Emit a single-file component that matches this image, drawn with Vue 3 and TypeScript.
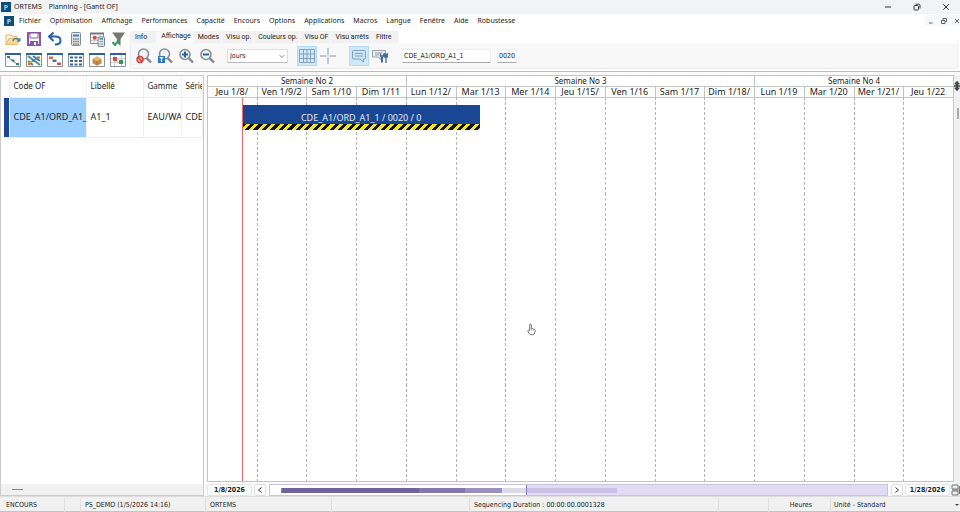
<script setup lang="ts">
import { ref } from 'vue'

interface Week { label: string; days: number }
interface Operation { label: string; start: number; length: number }

const menus: string[] = ['Fichier', 'Optimisation', 'Affichage', 'Performances', 'Capacité', 'Encours', 'Options', 'Applications', 'Macros', 'Langue', 'Fenêtre', 'Aide', 'Robustesse']
const tabs: string[] = ['Info', 'Affichage', 'Modes', 'Visu op.', 'Couleurs op.', 'Visu OF', 'Visu arrêts', 'Filtre']
const activeTab = ref('Affichage')

const weeks: Week[] = [
  { label: 'Semaine No 2', days: 4 },
  { label: 'Semaine No 3', days: 7 },
  { label: 'Semaine No 4', days: 4 },
]
const days: string[] = ['Jeu 1/8/', 'Ven 1/9/2', 'Sam 1/10', 'Dim 1/11', 'Lun 1/12/', 'Mar 1/13', 'Mer 1/14', 'Jeu 1/15/', 'Ven 1/16', 'Sam 1/17', 'Dim 1/18/', 'Lun 1/19', 'Mar 1/20', 'Mer 1/21/', 'Jeu 1/22']

// Positions on the time axis, in days from its left edge
const now = 0.68
const operations: Operation[] = [{ label: 'CDE_A1/ORD_A1_1 / 0020 / 0', start: 0.69, length: 4.78 }]
const toPercent = (value: number): string => `${(value / days.length) * 100}%`

const unit = ref('Jours')
const order = ref('CDE_A1/ORD_A1_1')
const operation = ref('0020')
const showGrid = ref(true)
const showTips = ref(true)
</script>

<template>
  <div class="app">
    <header class="titlebar">
      <svg class="logo" viewBox="0 0 10 10"><rect width="10" height="10" fill="#0d4f78" /><text x="5" y="8" text-anchor="middle" class="logo-letter">P</text></svg>
      <h1><span>ORTEMS</span><span>Planning - [Gantt OF]</span></h1>
      <div class="window-buttons">
        <button aria-label="Réduire"><svg viewBox="0 0 8 8"><path d="M1 4h6" /></svg></button>
        <button aria-label="Restaurer"><svg viewBox="0 0 8 8"><rect x="1" y="2.5" width="4.5" height="4.5" rx="1" /><path d="M2.7 1.2h3.1q1.2 0 1.2 1.2v3.1" /></svg></button>
        <button aria-label="Fermer"><svg viewBox="0 0 8 8"><path d="M1.2 1.2l5.6 5.6M6.8 1.2L1.2 6.8" /></svg></button>
      </div>
    </header>

    <nav class="menubar">
      <svg class="logo" viewBox="0 0 10 10"><rect width="10" height="10" fill="#0d4f78" /><text x="5" y="8" text-anchor="middle" class="logo-letter">P</text></svg>
      <button v-for="menu in menus" :key="menu" class="menu">{{ menu }}</button>
      <div class="child-buttons">
        <button aria-label="Réduire la fenêtre"><svg viewBox="0 0 8 8"><path d="M2 6h3.5" /></svg></button>
        <button aria-label="Restaurer la fenêtre"><svg viewBox="0 0 8 8"><path d="M1.5 3.5h3.5v3h-3.5zM3 3V1.5h3.5v3H5" /></svg></button>
        <button aria-label="Fermer la fenêtre"><svg viewBox="0 0 8 8"><path d="M2 2l4 4M6 2L2 6" /></svg></button>
      </div>
    </nav>

    <section class="toolbar">
      <div class="tools">
        <button aria-label="Ouvrir"><svg viewBox="0 0 16 16"><path d="M1 13V4h5l1.500 1.500H12V8" fill="#fff3d8" stroke="#e3b56f" /><path d="M1 13.500l3-6h11l-3 6z" fill="#fbd794" stroke="#e9b869" /><path d="M8 10q1-4 5.500-1.500" fill="none" stroke="#377db9" stroke-width="1.500" /><path d="M15.500 6.500v4h-4z" fill="#377db9" /></svg></button>
        <button aria-label="Enregistrer"><svg viewBox="0 0 16 16"><path d="M2 2h12v12H2z" fill="#fff" stroke="#8756a7" stroke-width="2" /><path d="M4 2h8v5H4z" fill="#fff" stroke="#8756a7" /><path d="M4 10h8v4H4z" fill="#8756a7" /><path d="M8 11h2v3H8z" fill="#fff" /></svg></button>
        <button aria-label="Annuler"><svg viewBox="0 0 16 16"><path d="M6.500 1.500L2 5.500l4.500 4.500M2.500 5.500h6q5 0 5 4t-5 4H8" fill="none" stroke="#2a62a5" stroke-width="2" /></svg></button>
        <button aria-label="Calculer"><svg viewBox="0 0 16 16"><rect x="3.500" y="1.500" width="9" height="13" rx="1" fill="#e5e8ea" stroke="#858b90" /><path d="M5 3.500h6v2H5z" fill="#3f85c6" /><path d="M5 8h6M5 10.500h6M5 13h6" stroke="#777" stroke-width="1.500" stroke-dasharray="1.500 .7" /></svg></button>
        <button aria-label="Calculer le planning"><svg viewBox="0 0 16 16"><path d="M1.500 2.500h13v10h-13z" fill="#fff" stroke="#8b8b8b" /><path d="M1 2.500h14" stroke="#6e7880" stroke-width="2" /><path d="M2 6.500h12M2 9.500h12M5 4v8M11 4v8" stroke="#c9c9c9" /><path d="M4 5h3.500v3.500H4z" fill="#d8493b" /><rect x="9" y="6" width="6.500" height="9.500" rx=".8" fill="#dce7f0" stroke="#75818b" /><path d="M10.500 8h3.500" stroke="#3f85c6" stroke-width="1.500" /><path d="M10.500 10.500H14M10.500 13H14" stroke="#788" stroke-dasharray="1 .3" /></svg></button>
        <button aria-label="Appliquer le filtre"><svg viewBox="0 0 16 16"><path d="M2 1.500h13L10.500 8v7L7 12V8z" fill="#777" /><path d="M2.500 11l2.500 3 5-6" fill="none" stroke="#319a5c" stroke-width="2" /></svg></button>

        <button aria-label="Enchaînement"><svg viewBox="0 0 16 16"><path class="frame" d="M.5 1.500h15v13H.5z" /><path class="band" d="M0 1h16v2H0z" /><path d="M2 4.500l12 9" stroke="#579078" /><path d="M2 4h3v2H2zM6.500 7.500h3v2h-3zM11 11h3v2h-3z" fill="#348263" /></svg></button>
        <button aria-label="Gantt ressources"><svg viewBox="0 0 16 16"><path class="frame" d="M.5 1.500h15v13H.5z" /><path class="band" d="M0 1h16v2H0z" /><path d="M2 4l12 9M2 9l5 4" stroke="#489277" stroke-width="2" /><path d="M2 12l11-7" stroke="#e2a438" stroke-width="2" /><path d="M7 4l7 5" stroke="#3976bd" stroke-width="2" /><path d="M2 11h2.500v2H2zM11 4.500h3v2h-3z" fill="#e66a35" /><path d="M6 7.500h3v2H6z" fill="#3976bd" /></svg></button>
        <button aria-label="Gantt OF"><svg viewBox="0 0 16 16"><path class="frame" d="M.5 1.500h15v13H.5z" /><path class="band" d="M0 1h16v2H0z" /><path d="M2 4.500h4v2.500H2z" fill="#e66a35" /><path d="M5.500 7.500h4V10h-4z" fill="#3976bd" /><path d="M10 10.500h4V13h-4z" fill="#c55941" /></svg></button>
        <button aria-label="Tableau"><svg viewBox="0 0 16 16"><path class="frame" d="M.5 1.500h15v13H.5z" /><path class="band" d="M0 1h16v2H0z" /><path d="M2 5.500h12M2 9h12M2 12.500h12" stroke="#3b6793" stroke-width="2" stroke-dasharray="3 1.500" /></svg></button>
        <button aria-label="Stocks"><svg viewBox="0 0 16 16"><path class="frame" d="M.5 1.500h15v13H.5z" /><path class="band" d="M0 1h16v2H0z" /><path d="M3.500 7l4.500-2.500L12.500 7v4.500L8 13.500l-4.500-2z" fill="#c88b45" /><path d="M3.500 7L8 9l4.500-2L8 4.500z" fill="#e6b778" /><path d="M8 9v4.500" stroke="#a86d2e" stroke-width=".7" /></svg></button>
        <button aria-label="Calendrier"><svg viewBox="0 0 16 16"><path class="frame" d="M.5 1.500h15v13H.5z" /><path class="band" d="M0 1h16v2H0z" /><path d="M1 6.500h14M1 10.500h14M4.500 3v11M11.500 3v11" stroke="#ccc" /><path d="M3 5h4v4H3z" fill="#d8493b" /><path d="M9 8h4v4H9z" fill="#3c8d68" /></svg></button>
      </div>

      <div class="ribbon">
        <div class="tabs" role="tablist">
          <button v-for="tab in tabs" :key="tab" role="tab" :aria-selected="tab === activeTab" :class="['tab', { active: tab === activeTab }]" @click="activeTab = tab">{{ tab }}</button>
        </div>
        <div class="controls">
          <div class="zooms">
            <button aria-label="Annuler le zoom"><svg viewBox="0 0 16 16"><path class="handle" d="M10.500 10L15 14.500" /><circle class="lens" cx="7.500" cy="6" r="5" /><circle cx="4" cy="11.500" r="3" fill="#f5c5be" stroke="#d23d30" stroke-width="1.400" /><path d="M2 9.500l4 4" stroke="#d23d30" stroke-width="1.400" /></svg></button>
            <button aria-label="Zoom texte"><svg viewBox="0 0 16 16"><path class="handle" d="M10.500 10L15 14.500" /><circle class="lens" cx="7.500" cy="6" r="5" /><path d="M1 8h7v7H1z" fill="#2c75b8" /><path d="M2.500 9.700h4M4.500 9.700V14" stroke="#fff" stroke-width="1.200" /></svg></button>
            <button aria-label="Zoom avant"><svg viewBox="0 0 16 16"><path class="handle" d="M10.500 10L15 14.500" /><circle class="lens" cx="7" cy="6.500" r="5" /><path d="M4 6.500h6M7 3.500v6" stroke="#2a65a3" stroke-width="2" /></svg></button>
            <button aria-label="Zoom arrière"><svg viewBox="0 0 16 16"><path class="handle" d="M10.500 10L15 14.500" /><circle class="lens" cx="7" cy="6.500" r="5" /><path d="M4 6.500h6" stroke="#2a65a3" stroke-width="2" /></svg></button>
          </div>
          <div class="unit">
            <select v-model="unit" aria-label="Unité de temps"><option>Jours</option></select>
            <svg viewBox="0 0 8 8"><path d="M1.500 3L4 5.500 6.500 3" /></svg>
          </div>
          <div class="toggles">
            <button aria-label="Grille" :class="{ pressed: showGrid }" @click="showGrid = !showGrid"><svg viewBox="0 0 16 16"><path d="M.5 1.500h15v13H.5zM4.500 1.500v13M8 1.500v13M11.500 1.500v13M.5 6h15M.5 10.500h15" fill="none" stroke="#7f9bb6" stroke-width=".9" /></svg></button>
            <button aria-label="Repère"><svg viewBox="0 0 16 16"><path d="M8 0v6.500M8 9.500V16M0 8h6.500M9.500 8H16M7.500 8h1" stroke="#7f98ae" /></svg></button>
          </div>
          <div class="toggles">
            <button aria-label="Infobulles" :class="{ pressed: showTips }" @click="showTips = !showTips"><svg viewBox="0 0 16 16"><path d="M2.500 2.500h11q1 0 1 1V10q0 1-1 1h-1v3L9 11H2.500q-1 0-1-1V3.500q0-1 1-1z" fill="#cbe3f6" stroke="#86a0b9" /><path d="M4 5.500h8M4 8h8" stroke="#8fa5ba" /></svg></button>
            <button aria-label="Paramétrer les infobulles"><svg viewBox="0 0 16 16"><path d="M.5 2.500h13V9H9v2.500L6 9H.5z" fill="#eee" stroke="#9a9fa5" /><path d="M3 5h7M3 7h4" stroke="#999" /><path d="M10 8.500v6" stroke="#416f9c" stroke-width="2" /><path d="M8.500 5.500v2.500h3V5.500M14 6v9M12.800 5v4h2.500V5" fill="none" stroke="#416f9c" stroke-width="1.300" /></svg></button>
          </div>
          <div class="fields">
            <input v-model="order" class="order" aria-label="Ordre de fabrication">
            <input v-model="operation" class="operation" aria-label="Opération">
          </div>
        </div>
      </div>
    </section>

    <main class="workspace">
      <section class="orders">
        <table>
          <colgroup><col class="c-mark"><col class="c-code"><col class="c-label"><col class="c-range"><col class="c-serie"></colgroup>
          <thead><tr><th></th><th>Code OF</th><th>Libellé</th><th>Gamme</th><th>Série</th></tr></thead>
          <tbody><tr><td class="mark"></td><td class="selected">CDE_A1/ORD_A1_1</td><td>A1_1</td><td>EAU/WAT</td><td>CDE_</td></tr></tbody>
        </table>
        <div class="orders-scroll"><span class="thumb"></span></div>
      </section>

      <section class="planning">
        <div class="chart">
          <div class="axis weeks">
            <div v-for="week in weeks" :key="week.label" :style="{ gridColumn: `span ${week.days}` }">{{ week.label }}</div>
          </div>
          <div class="axis days"><div v-for="day in days" :key="day">{{ day }}</div></div>
          <div class="plot">
            <div class="axis lines"><div v-for="day in days" :key="day"></div></div>
            <div v-for="op in operations" :key="op.label" class="operation-bar" :style="{ left: toPercent(op.start), width: toPercent(op.length) }">
              <span>{{ op.label }}</span>
            </div>
            <div class="now" :style="{ left: toPercent(now) }"></div>
            <svg class="pointer" viewBox="0 0 10 14"><path d="M3 8V2q0-1 .9-1t.9 1v4q2-.6 2.200.6 1.800-.4 2 1V9q0 4-3.500 4-2.500 0-3.500-2L.8 8.200Q1.500 6.800 3 8.500z" fill="#fff" stroke="#555" stroke-width=".9" /><path d="M4.800 6v2M7 6.800v1.500" stroke="#777" stroke-width=".6" /></svg>
          </div>
        </div>
        <div class="timeline">
          <span class="date">1/8/2026</span>
          <button class="step" aria-label="Période précédente"><svg viewBox="0 0 8 8"><path d="M5.500 1.500L2.500 4l3 2.500" /></svg></button>
          <div class="track"><div class="window"><div class="load"></div></div><div class="beyond"><div class="load-light"></div></div></div>
          <button class="step" aria-label="Période suivante"><svg viewBox="0 0 8 8"><path d="M2.500 1.500L5.500 4l-3 2.500" /></svg></button>
          <span class="date">1/28/2026</span>
        </div>
      </section>

      <aside class="side">
        <svg class="split" viewBox="0 0 7 12"><path d="M3.500 0L7 4H5v1h2v2H5v1h2L3.500 12 0 8h2V7H0V5h2V4H0z" /></svg>
        <span class="side-thumb"></span>
        <svg class="layout" viewBox="0 0 9 12"><path d="M1 1h6v4H1zM1 7h6v4H1zM1 6h7M8.500 2v8" /></svg>
      </aside>
    </main>

    <footer class="status">
      <span>ENCOURS</span><span></span><span>PS_DEMO (1/5/2026 14:16)</span><span>ORTEMS</span><span></span>
      <span>Sequencing Duration : 00:00:00.0001328</span><span></span><span class="right">Heures</span><span>Unité - Standard</span><i class="caret"></i>
    </footer>
  </div>
</template>

<style>
html, body { margin: 0; }
</style>

<style scoped>
* { box-sizing: border-box; }
.app { display: flex; flex-direction: column; height: 100vh; overflow: hidden; background: #fff; color: #222; font: 8px/12px "Noto Sans", "Open Sans", sans-serif; }
button { border: 0; padding: 0; margin: 0; background: none; color: inherit; font: inherit; display: flex; align-items: center; justify-content: center; }
.titlebar { display: flex; align-items: center; height: 14px; flex: none; background: #f2f3f5; padding-left: 1px; gap: 3px; }
.logo { width: 10px; height: 10px; flex: none; }
.logo-letter { fill: #a9d5ea; font: bold 7px "Noto Sans", sans-serif; }
h1 { display: flex; gap: 7px; margin: 0; font: 7px/14px "Noto Sans", sans-serif; }
.window-buttons { display: flex; margin-left: auto; }
.window-buttons button { width: 29px; height: 14px; }
.window-buttons svg, .child-buttons svg { width: 8px; height: 8px; fill: none; stroke: #333; stroke-width: 1; }
.menubar { display: flex; align-items: center; height: 13px; flex: none; padding-left: 4px; gap: 9px; font-size: 7px; }
.menubar .logo { margin-right: -4px; }
.menu { white-space: nowrap; line-height: 13px; }
.child-buttons { display: flex; margin: 0 -3px 0 auto; gap: 1px; }
.child-buttons button { width: 12px; height: 11px; background: #f6f7f9; }
.child-buttons svg { stroke: #567; }

.toolbar { display: flex; flex: none; height: 45px; padding: 1px 2px 2px 0; border-bottom: 1px solid #bcbcbc; }
.tools { display: grid; grid-template-columns: repeat(6, 21px); grid-template-rows: 21px 21px; width: 130px; flex: none; padding-left: 2px; }
.tools svg, .controls button svg { width: 16px; height: 16px; fill: none; }
.frame { fill: #fff; stroke: #8b9299; }
.band { fill: #2f619b; }
.ribbon { flex: 1; min-width: 0; display: flex; flex-direction: column; }
.tabs { display: flex; height: 15px; align-items: flex-end; font: 7px/12px Roboto, "Noto Sans", sans-serif; }
.tab { height: 12px; padding: 0 3px 0 4px; background: #f1f1f1; box-shadow: inset -1px 0 #f8f8f8; white-space: nowrap; }
.tab:first-child { padding: 0 10px 0 5px; }
.tab:last-child { padding-right: 7px; }
.tab.active { height: 14px; padding-bottom: 1px; background: #f9f9f9; }
.controls { flex: 1; display: flex; align-items: center; background: #f8f8f8; border: 1px solid #ebebeb; border-top: 0; padding-left: 2px; }
.zooms { display: flex; }
.zooms button { width: 21px; height: 20px; }
.lens { fill: #eef5fa; stroke: #8a8d90; stroke-width: 1.6; }
.handle { stroke: #85888b; stroke-width: 2.4; }
.unit { position: relative; width: 61px; margin: 0 9px 0 10px; }
.unit select { appearance: none; display: block; width: 100%; height: 14px; padding: 0 2px; border: 1px solid #ddd; border-bottom-color: #bbb; border-radius: 1px; background: #fff; color: #222; font: 7px/12px "DejaVu Sans Condensed", "DejaVu Sans", sans-serif; }
.unit svg { position: absolute; right: 2px; top: 3px; width: 8px; height: 8px; fill: none; stroke: #777; stroke-width: .8; pointer-events: none; }
.toggles { display: flex; gap: 1px; margin-right: 11px; }
.toggles button { width: 20px; height: 20px; }
.toggles .pressed { background: #cfe8fb; border: 1px solid #b4dbf8; }
.fields { display: flex; gap: 6px; margin-left: 1px; }
.fields input { height: 14px; padding: 0 1px; border: 1px solid #eee; border-bottom-color: #aaa; background: #fff; color: #222; font: 7px/12px "DejaVu Sans Condensed", "DejaVu Sans", sans-serif; outline: 0; }
.fields .order { width: 89px; }
.fields .operation { width: 20px; }

.workspace { display: flex; flex: 1; min-height: 0; padding-top: 3px; background: #fbfbfb; }
.orders { display: flex; flex-direction: column; width: 204px; flex: none; border: 1px solid #ccc; background: #fff; margin-right: 3px; }
table { table-layout: fixed; border-collapse: collapse; margin-left: 3px; width: calc(100% - 3px); }
.c-mark { width: 5px; } .c-code { width: 77px; } .c-label { width: 57px; } .c-range { width: 38px; }
th, td { padding: 0 0 0 4px; text-align: left; font-weight: 400; white-space: nowrap; overflow: hidden; border-right: 1px solid #f0f0f0; border-bottom: 1px solid #ececec; }
th { height: 21px; font-size: 8px; } td { height: 40px; font-size: 9px; }
th:first-child, td:first-child { padding: 0; }
.mark { background: #1a4794; }
.selected { background: #9bcfff; }
.orders-scroll { margin-top: auto; height: 11px; background: #f1f1f1; display: flex; align-items: center; padding-left: 11px; }
.thumb { width: 11px; height: 1px; background: #888; }

.planning { display: flex; flex-direction: column; flex: 1; min-width: 0; }
.chart { display: flex; flex-direction: column; flex: 1; min-height: 0; border: 1px solid #c4c4c4; border-width: 1px 0 1px 1px; background: #fff; }
.axis { display: grid; grid-template-columns: repeat(15, 1fr); }
.weeks, .days { text-align: center; line-height: 10px; white-space: nowrap; }
.weeks { font-size: 8px; }
.days { font-size: 9px; }
.weeks > div, .days > div { height: 11px; border-right: 1px solid #c4c4c4; border-bottom: 1px solid #c4c4c4; }
.days > div { padding-right: 1px; }
.plot { position: relative; flex: 1; }
.lines { height: 100%; }
.lines > div { border-right: 1px solid; border-image: repeating-linear-gradient(#b4b4b4 0 3px, #fff 3px 5px) 1; }
.lines > div:last-child { border-right: 1px solid #ccc; border-image: none; }
.now { position: absolute; top: 0; bottom: 0; width: 1px; background: #e26b6b; }
.operation-bar { position: absolute; top: 7px; height: 25px; background: repeating-linear-gradient(135deg, #111 0 3px, #f5e71c 3px 6px) bottom / 100% 6px no-repeat, #1a4794; color: #e1ebfa; text-align: center; font-size: 9px; }
.operation-bar span { line-height: 26px; }
.pointer { position: absolute; left: 42.7%; top: 225px; width: 9px; height: 13px; }
.timeline { display: flex; align-items: stretch; height: 12px; margin: 2px 4px 0 0; gap: 2px; }
.date { width: 45px; flex: none; border: 1px solid #e4e4e4; border-radius: 2px; background: #fff; text-align: center; font: bold 7px/11px "DejaVu Sans Condensed", "DejaVu Sans", sans-serif; }
.step { width: 12px; flex: none; border: 1px solid #ddd; border-radius: 2px; background: #fff; }
.step svg { width: 8px; height: 8px; fill: none; stroke: #333; }
.track { flex: 1; display: flex; border: 1px solid #c9c5dd; background: #fff; margin: 0 1px; }
.window { width: 41.600%; padding-left: 11px; border-right: 1px solid #8c7fc5; display: flex; align-items: center; }
.load { width: 100%; height: 5px; border-left: 1px solid #d66; background: linear-gradient(90deg, #6e629f 0 56%, #8278ac 56% 75%, #9990bc 75% 90%, #dedbe8 90%); }
.beyond { flex: 1; background: #e1dcf3; display: flex; align-items: center; }
.load-light { width: 25%; height: 5px; background: #cbc3e5; }

.side { display: flex; flex-direction: column; align-items: flex-end; width: 6px; flex: none; background: #f1f1f1; }
.split { width: 6px; height: 12px; margin-top: 5px; fill: #444; }
.side-thumb { width: 2px; height: 11px; margin: 16px 1px 0; background: #aaa; }
.layout { width: 9px; height: 12px; margin-top: auto; fill: #eee; stroke: #777; stroke-width: 1; }

.status { position: relative; display: grid; grid-template-columns: 65fr 16fr 125fr 126fr 138fr 249fr 50fr 62fr 129fr; flex: none; height: 16px; padding: 1px 0; background: #f1f1f1; border-top: 1px solid #ddd; border-bottom: 1px solid #b8c6da; font: 7px/15px "DejaVu Sans Condensed", "DejaVu Sans", sans-serif; white-space: nowrap; }
.status span { padding: 0 4px; border-right: 1px solid #e0e0e0; min-width: 0; }
.status span:first-child { padding-left: 6px; }
.status .right { text-align: right; padding-right: 18px; }
.status span:last-of-type { border: 0; padding-left: 3px; }
.caret { position: absolute; right: 1px; top: 7px; border: 2px solid transparent; border-top-color: #444; }
</style>
